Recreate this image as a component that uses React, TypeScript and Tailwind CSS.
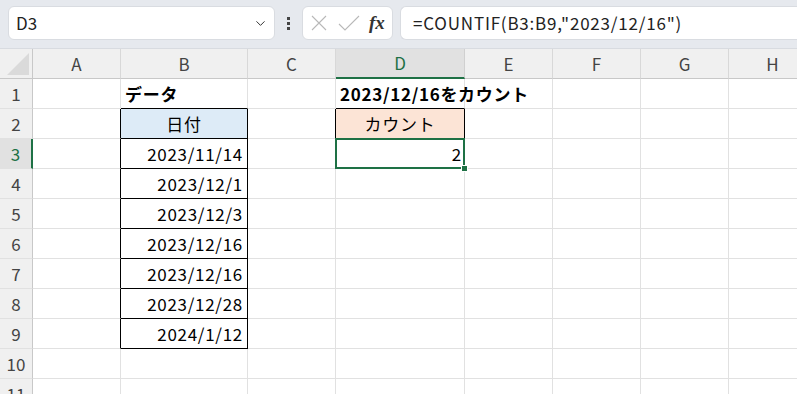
import { ChevronDown } from 'lucide-react'

const font = '[font-family:"Noto_Sans_CJK_JP","Noto_Sans",sans-serif]'

const cols = ['A', 'B', 'C', 'D', 'E', 'F', 'G', 'H']
const colWidths = 'grid-cols-[33px_88px_127px_88px_129px_88px_88px_88px_88px]'

const dates = ['2023/11/14', '2023/12/1', '2023/12/3', '2023/12/16', '2023/12/16', '2023/12/28', '2024/1/12']

type CellProps = {
  children?: React.ReactNode
  className?: string
  bg?: string
  pad?: string
}

function Cell({ children, className = '', bg = 'bg-white', pad = 'px-[4px]' }: CellProps) {
  return (
    <div className={`relative flex h-[30px] items-center border-b border-r border-[#e1e1e1] text-[17px] tracking-[0.7px] text-black ${pad} ${bg} ${className}`}>
      {children}
    </div>
  )
}

function RowHead({ n, active }: { n: number; active?: boolean }) {
  return (
    <div
      className={`flex h-[30px] items-center justify-center border-b border-[#e1e1e1] text-[17px] ${
        active ? 'border-r-2 border-r-[#1e7145] bg-[#e1e1e1] text-[#1e7145]' : 'border-r border-r-[#c8c8c8] bg-[#f0f0f0] text-[#444]'
      }`}
    >
      {n}
    </div>
  )
}

function row(n: number) {
  const cells: React.ReactNode[] = []
  const inTable = n >= 2 && n <= 9
  // A
  cells.push(<Cell key="A" className={inTable ? 'border-r-black' : ''} />)
  // B
  if (n === 1) {
    cells.push(
      <Cell key="B" className="border-b-black font-bold tracking-[0.3px]">
        データ
      </Cell>,
    )
  } else if (n === 2) {
    cells.push(
      <Cell key="B" bg="bg-[#ddebf7]" className="justify-center border-b-black border-r-black text-[#333]">
        日付
      </Cell>,
    )
  } else if (inTable) {
    cells.push(
      <Cell key="B" className="justify-end border-b-black border-r-black">
        {dates[n - 3]}
      </Cell>,
    )
  } else {
    cells.push(<Cell key="B" />)
  }
  // C
  cells.push(<Cell key="C" className={n === 2 ? 'border-r-black' : ''} />)
  // D
  if (n === 1) {
    cells.push(
      <Cell key="D" className="overflow-visible whitespace-nowrap border-b-black font-bold tracking-[0.4px]">
        <span className="relative z-10">2023/12/16をカウント</span>
      </Cell>,
    )
  } else if (n === 2) {
    cells.push(
      <Cell key="D" bg="bg-[#fce4d6]" className="justify-center border-b-black border-r-black text-[#333]">
        カウント
      </Cell>,
    )
  } else if (n === 3) {
    cells.push(
      <Cell key="D" pad="pl-[4px] pr-[2px]" className="justify-end">
        2
        <div className="absolute -left-px -top-px bottom-[-1px] right-[-1px] border-2 border-[#1e7145]" />
        <div className="absolute bottom-[-4px] right-[-4px] z-10 h-[7px] w-[7px] border border-white bg-[#1e7145]" />
      </Cell>,
    )
  } else {
    cells.push(<Cell key="D" />)
  }
  cells.push(<Cell key="E" />, <Cell key="F" />, <Cell key="G" />, <Cell key="H" />)
  return (
    <div key={n} className="contents">
      <RowHead n={n} active={n === 3} />
      {cells}
    </div>
  )
}

export default function App() {
  return (
    <div className={`h-[394px] w-[797px] overflow-hidden bg-white ${font}`}>
      <div className="flex h-[49px] items-start border-b border-[#d8dbe0] bg-[#e6e9ee] pt-[6px]">
        <div className="ml-[8px] flex h-[34px] w-[267px] items-center justify-between rounded-[6px] border border-[#d9dce1] bg-white pl-[7px] pr-[6px]">
          <span className="text-[17px] text-[#222]">D3</span>
          <ChevronDown size={15} strokeWidth={1.6} className="text-[#333]" />
        </div>
        <div className="flex h-[34px] w-[27px] flex-col items-center justify-center gap-[2px]">
          <span className="h-[3px] w-[3px] bg-[#444]" />
          <span className="h-[3px] w-[3px] bg-[#444]" />
          <span className="h-[3px] w-[3px] bg-[#444]" />
        </div>
        <div className="flex h-[34px] w-[91px] items-center rounded-[6px] border border-[#d9dce1] bg-white pl-[6px]">
          <svg width="18" height="18" viewBox="0 0 18 18" className="ml-[1px]">
            <path d="M2 2 L16 16 M16 2 L2 16" stroke="#b8b8b8" strokeWidth="1.1" fill="none" />
          </svg>
          <svg width="22" height="18" viewBox="0 0 22 18" className="ml-[10px]">
            <path d="M1 10 L7 16 L21 2" stroke="#b8b8b8" strokeWidth="1.1" fill="none" />
          </svg>
          <span className="ml-[9px] text-[19px] font-bold italic text-[#333] [font-family:'Liberation_Serif',serif]">fx</span>
        </div>
        <div className="ml-[7px] flex h-[34px] flex-1 items-center rounded-l-[6px] border border-r-0 border-[#d9dce1] bg-white pl-[12px]">
          <span className="text-[17px] tracking-[0.8px] text-[#222]">=COUNTIF(B3:B9,"2023/12/16")</span>
        </div>
      </div>

      <div className={`grid ${colWidths}`}>
        <div className="flex h-[30px] items-end justify-end border-b border-r border-[#c8c8c8] bg-[#f0f0f0] pb-[3px] pr-[3px]">
          <svg width="22" height="22" viewBox="0 0 22 22">
            <path d="M22 0 L22 22 L0 22 Z" fill="#dadada" />
          </svg>
        </div>
        {cols.map((c) => (
          <div
            key={c}
            className={`flex h-[30px] items-center justify-center text-[17px] ${
              c === 'D'
                ? 'border-b-2 border-r border-b-[#1e7145] border-r-[#d0d0d0] bg-[#e1e1e1] text-[#1e7145]'
                : 'border-b border-r border-b-[#c8c8c8] border-r-[#d8d8d8] bg-[#f0f0f0] text-[#444]'
            }`}
          >
            {c}
          </div>
        ))}
        {Array.from({ length: 11 }, (_, i) => row(i + 1))}
      </div>
    </div>
  )
}
